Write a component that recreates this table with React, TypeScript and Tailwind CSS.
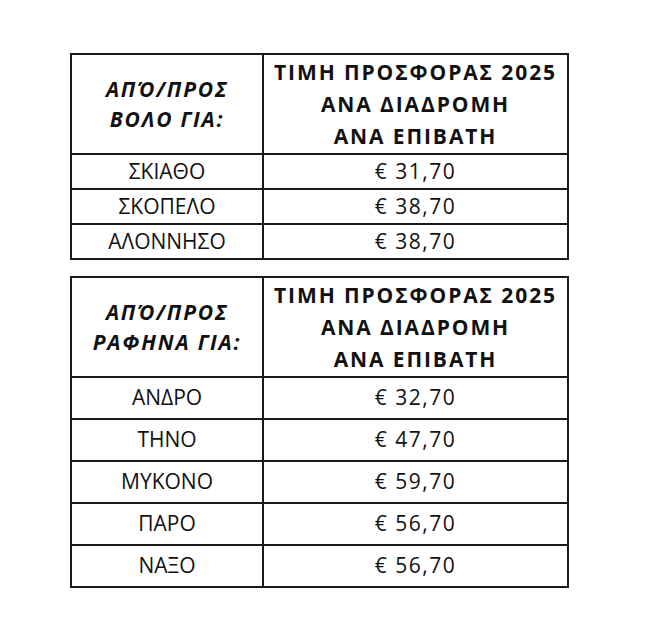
import React from "react";

type Row = { dest: string; price: string };

const voloRows: Row[] = [
  { dest: "ΣΚΙΑΘΟ", price: "€ 31,70" },
  { dest: "ΣΚΟΠΕΛΟ", price: "€ 38,70" },
  { dest: "ΑΛΟΝΝΗΣΟ", price: "€ 38,70" },
];

const rafinaRows: Row[] = [
  { dest: "ΑΝΔΡΟ", price: "€ 32,70" },
  { dest: "ΤΗΝΟ", price: "€ 47,70" },
  { dest: "ΜΥΚΟΝΟ", price: "€ 59,70" },
  { dest: "ΠΑΡΟ", price: "€ 56,70" },
  { dest: "ΝΑΞΟ", price: "€ 56,70" },
];

const PriceTable: React.FC<{ from: string; rows: Row[]; rowClass: string }> = ({ from, rows, rowClass }) => (
  <table className="w-[499px] table-fixed border-collapse border-2 border-[#1a1a1a] text-[#111]">
    <colgroup>
      <col className="w-[192px]" />
      <col />
    </colgroup>
    <thead>
      <tr className="h-[100px]">
        <th className="border-2 border-[#1a1a1a] text-[21px] leading-[30px] font-bold italic tracking-[1.8px]">
          ΑΠΌ/ΠΡΟΣ
          <br />
          {from} ΓΙΑ:
        </th>
        <th className="border-2 border-[#1a1a1a] text-[21px] leading-[32px] font-bold tracking-[1.9px]">
          ΤΙΜΗ ΠΡΟΣΦΟΡΑΣ 2025
          <br />
          ΑΝΑ ΔΙΑΔΡΟΜΗ
          <br />
          ΑΝΑ ΕΠΙΒΑΤΗ
        </th>
      </tr>
    </thead>
    <tbody>
      {rows.map((r) => (
        <tr key={r.dest} className={rowClass}>
          <td className="border-2 border-[#1a1a1a] text-center text-[21px] font-medium">{r.dest}</td>
          <td className="border-2 border-[#1a1a1a] text-center text-[21px] font-medium tracking-[1.5px]">{r.price}</td>
        </tr>
      ))}
    </tbody>
  </table>
);

export default function App() {
  return (
    <div className="w-[660px] h-[626px] bg-white pl-[70px] pt-[53px] flex flex-col gap-[16px] font-['Open_Sans',sans-serif]">
      <PriceTable from="ΒΟΛΟ" rows={voloRows} rowClass="h-[35px]" />
      <PriceTable from="ΡΑΦΗΝΑ" rows={rafinaRows} rowClass="h-[42px]" />
    </div>
  );
}
